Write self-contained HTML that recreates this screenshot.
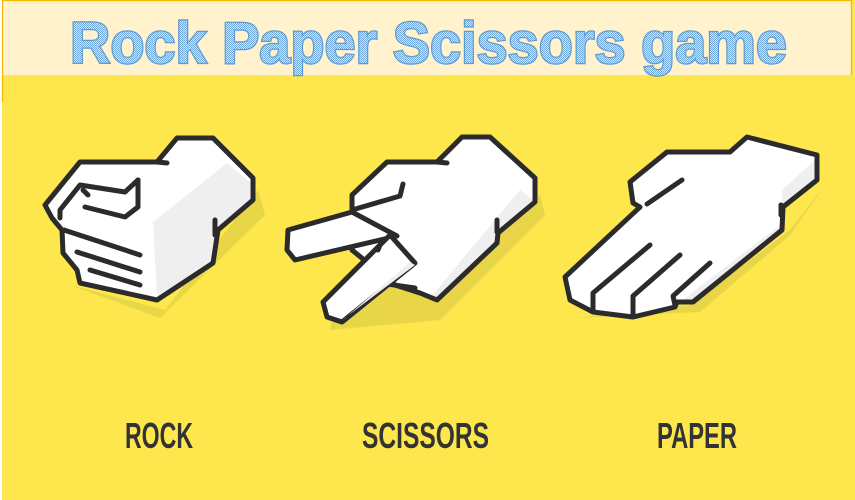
<!DOCTYPE html>
<html><head><meta charset="utf-8"><style>
html,body{margin:0;padding:0;width:855px;height:500px;overflow:hidden;background:#fff}
</style></head><body>
<svg width="855" height="500" viewBox="0 0 855 500" xmlns="http://www.w3.org/2000/svg">
<defs>
<pattern id="pt" width="2" height="2" patternUnits="userSpaceOnUse">
<rect width="2" height="2" fill="#d6e6f7"/><rect width="1" height="1" fill="#6fa6db"/><rect x="1" y="1" width="1" height="1" fill="#6fa6db"/>
</pattern>
</defs>
<rect x="2" y="0" width="853" height="500" fill="#fde74c"/>
<rect x="2" y="0" width="850" height="75" fill="#fff2cc"/>
<path d="M2.5 102 V0.5 H851.5 V75" fill="none" stroke="#f5b800" stroke-width="1.2"/>
<text x="70" y="63" font-family="Liberation Sans, sans-serif" font-weight="bold" font-size="58" textLength="717" lengthAdjust="spacingAndGlyphs" fill="url(#pt)" stroke="#5b9bd5" stroke-width="2.5" paint-order="stroke">Rock Paper Scissors game</text>

<g stroke="#2b2b2b" stroke-width="5" stroke-linejoin="round" stroke-linecap="round" fill="none">
<!-- ROCK -->
<polygon points="70,285 160,318 265,215 258,190 165,310" fill="#e8d648" stroke="none"/>
<polygon points="45,205 80,162 157,162 177,138 213,138 253,178 253,200 218,230 213,263 157,300 80,283 77,270 63,253 62,230 52,218" fill="#fff" stroke="none"/>
<polygon points="153,222 227,163 250,182 250,200 216,228 210,261 157,297" fill="#efefef" stroke="none"/>
<polygon points="45,205 80,162 157,162 177,138 213,138 253,178 253,200 218,230 213,263 157,300 80,283 77,270 63,253 62,230 52,218"/>
<path d="M60,218 L60,210 L80,185 L125,192 L138,180"/>
<path d="M83,190 L88,195"/>
<path d="M138,180 L138,207 L125,217 L85,207"/>
<path d="M64,230 L140,255"/>
<path d="M77,252 L140,272"/>
<path d="M90,270 L140,285"/>
<path d="M215,220 L215,235"/>
<path d="M157,162 L167,163"/>
<!-- SCISSORS -->
<polygon points="330,330 440,320 545,215 540,195 335,305" fill="#e8d648" stroke="none"/>
<polygon points="352,195 387,162 437,162 462,137 490,137 535,178 535,202 498,233 497,243 437,300 420,293 395,285 352,250" fill="#fff" stroke="none"/>
<polygon points="430,298 520,190 533,200 533,204 496,232 495,244 437,298" fill="#efefef" stroke="none"/>
<polygon points="352,195 387,162 437,162 462,137 490,137 535,178 535,202 498,233 497,243 437,300 420,293 395,285 352,250"/>
<path d="M380,283 L415,288"/>
<polygon points="288,230 352,212 397,236 295,260 287,250" fill="#fff"/>
<polygon points="390,235 415,263 342,322 327,317 323,302" fill="#fff"/>
<polygon points="345,318 410,262 415,265 342,320" fill="#efefef" stroke="none"/>
<path d="M352,210 L400,196 L403,184"/>
<path d="M378,250 L380,245"/>
<path d="M497,220 L497,232"/>
<path d="M437,162 L447,163"/>
<!-- PAPER -->
<polygon points="575,318 700,312 790,235 825,185 790,230 690,305" fill="#e8d648" stroke="none"/>
<polygon points="630,182 667,152 730,152 747,137 817,155 817,180 783,207 782,230 693,302 677,302 675,307 633,317 593,312 570,300 565,277 640,207 633,203" fill="#fff" stroke="none"/>
<polygon points="680,302 780,225 782,230 693,302" fill="#efefef" stroke="none"/>
<polygon points="782,205 815,180 815,160 782,190" fill="#efefef" stroke="none"/>
<polygon points="630,182 667,152 730,152 747,137 817,155 817,180 783,207 782,230 693,302 677,302 675,307 633,317 593,312 570,300 565,277 640,207 633,203"/>
<path d="M682,180 L647,204"/>
<path d="M650,245 L593,293 L593,310"/>
<path d="M680,255 L633,296 L633,315"/>
<path d="M710,263 L673,296 L675,305"/>
<path d="M781,205 L781,215"/>
</g>

<g font-family="'Liberation Sans Narrow','Liberation Sans',sans-serif" font-weight="bold" font-size="36" fill="#333">
<text x="125" y="448" textLength="68" lengthAdjust="spacingAndGlyphs">ROCK</text>
<text x="362" y="448" textLength="127" lengthAdjust="spacingAndGlyphs">SCISSORS</text>
<text x="657" y="448" textLength="80" lengthAdjust="spacingAndGlyphs">PAPER</text>
</g>
</svg>
</body></html>
